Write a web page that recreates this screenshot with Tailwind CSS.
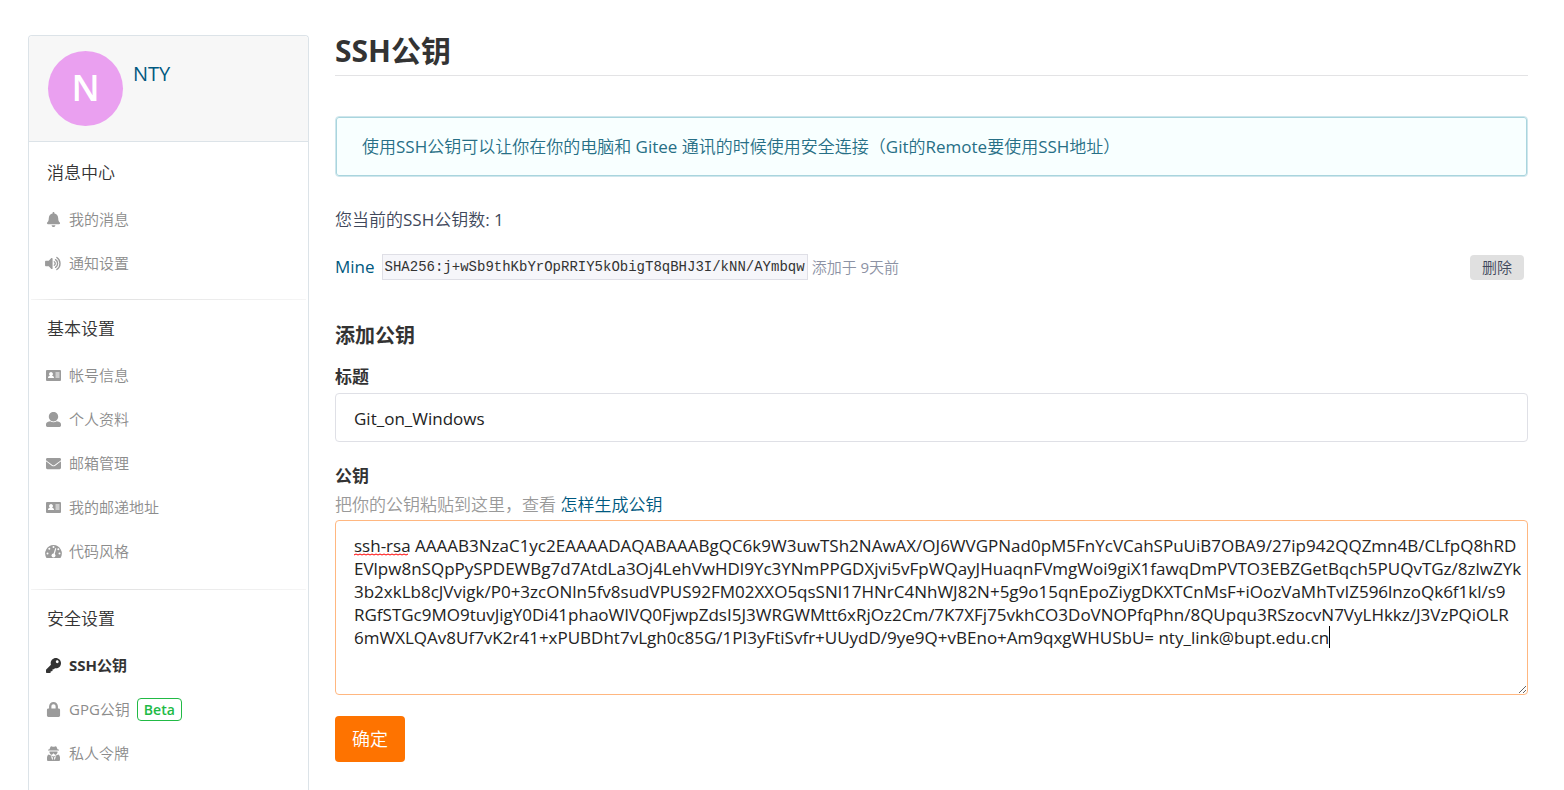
<!DOCTYPE html>
<html lang="zh-CN">
<head>
    <meta charset="UTF-8">
    <meta name="viewport" content="width=device-width, initial-scale=1.0">
    <title>SSH公钥</title>
    <script src="https://cdn.jsdelivr.net/npm/@tailwindcss/browser@4"></script>
    <style>
        body {
            font-family: 'Open Sans', 'Noto Sans CJK SC DemiLight', 'Noto Sans CJK SC', sans-serif;
        }
        .font-bold {
            font-family: 'Open Sans', 'Noto Sans CJK SC', sans-serif;
        }
    </style>
</head>
<body class="bg-white text-[17px] leading-6 text-[#40485b]">

    <div class="flex items-stretch gap-[26px] min-h-screen pl-7 pr-9">

        <!-- 侧边栏 -->
        <aside class="w-[281px] shrink-0 mt-[35px] border border-b-0 border-[#dce3e8] rounded-t text-[#333]">
            <div class="flex items-start gap-2.5 h-[106px] pt-[15px] pl-[19px] bg-[#f7f7f7] border-b border-[#dce3e8] rounded-t">
                <span class="flex items-center justify-center size-[75px] pb-0.5 rounded-full bg-[#eaa0f0] text-white text-[36px] font-semibold">N</span>
                <a href="#" class="mt-[11px] text-[20px] text-[#005980]">NTY</a>
            </div>

            <nav class="pt-0.5">
                <section class="pt-[7px] pb-3.5">
                    <h2 class="flex items-center h-11 mb-0.5 pl-[18px]">消息中心</h2>
                    <ul class="text-[15px] text-[#8c8c8c]">
                        <li><a href="#" class="flex items-center gap-[7px] h-11 pl-4">
                            <svg class="w-[17px] h-[15px] fill-[#9b9b9b]" viewBox="0 0 448 512"><path d="M224 512c35.32 0 63.97-28.65 63.97-64H160.03c0 35.35 28.65 64 63.97 64zm215.39-149.71c-19.32-20.76-55.47-51.99-55.47-154.29 0-77.7-54.48-139.9-127.94-155.16V32c0-17.67-14.32-32-31.98-32s-31.98 14.33-31.98 32v20.84C118.56 68.1 64.08 130.3 64.08 208c0 102.3-36.15 133.53-55.47 154.29-6 6.45-8.66 14.16-8.61 21.71.11 16.4 12.98 32 32.1 32h383.8c19.12 0 32-15.6 32.1-32 .05-7.55-2.61-15.27-8.61-21.71z"/></svg>
                            我的消息</a></li>
                        <li><a href="#" class="flex items-center gap-[7px] h-11 pl-4">
                            <svg class="w-[17px] h-[15px] fill-[#9b9b9b]" viewBox="0 0 576 512"><path d="M215 71L126 160H24c-13 0-24 11-24 24v144c0 13 11 24 24 24h102l89 89c15 15 41 4 41-17V88c0-21-26-32-41-17z"/><g fill="none" stroke="#9b9b9b" stroke-width="46" stroke-linecap="round"><path d="M314 197c44 24 44 94 0 118"/><path d="M358 124c94 60 94 204 0 264"/><path d="M402 51c144 96 144 314 0 410"/></g></svg>
                            通知设置</a></li>
                    </ul>
                </section>
                <hr class="h-px mx-0.5 border-0 bg-linear-to-r from-[#f5f5f5] via-[#dedede] via-15% to-[#f5f5f5]">

                <section class="pt-[7px] pb-4">
                    <h2 class="flex items-center h-11 mb-0.5 pl-[18px]">基本设置</h2>
                    <ul class="text-[15px] text-[#8c8c8c]">
                        <li><a href="#" class="flex items-center gap-[7px] h-11 pl-4">
                            <svg class="w-[17px] h-[15px] fill-[#9b9b9b]" viewBox="0 0 17 15"><path fill-rule="evenodd" d="M2 2h13a1 1 0 0 1 1 1v9a1 1 0 0 1-1 1H2a1 1 0 0 1-1-1V3a1 1 0 0 1 1-1zM6 4a2 2 0 0 0-1 3.700C3.500 8 3 8.700 3 10h6c0-1.300-.5-2-2-2.300A2 2 0 0 0 6 4zM10.500 4.500v1h4v-1zM10.500 6.500v1h4v-1zM10.500 8.500v1h4v-1z"/></svg>
                            帐号信息</a></li>
                        <li><a href="#" class="flex items-center gap-[7px] h-11 pl-4">
                            <svg class="w-[17px] h-[15px] fill-[#9b9b9b]" viewBox="0 0 512 512"><path d="M256 0c88.366 0 160 71.634 160 160s-71.634 160-160 160S96 248.366 96 160 167.634 0 256 0zm183.283 333.821l-71.313-17.828c-74.923 53.89-165.738 41.864-223.94 0l-71.313 17.828C29.981 344.505 0 382.903 0 426.955V464c0 26.51 21.49 48 48 48h416c26.51 0 48-21.49 48-48v-37.045c0-44.052-29.981-82.45-72.717-93.134z"/></svg>
                            个人资料</a></li>
                        <li><a href="#" class="flex items-center gap-[7px] h-11 pl-4">
                            <svg class="w-[17px] h-[15px] fill-[#9b9b9b]" viewBox="0 0 512 512"><path d="M502.3 190.8c3.900-3.100 9.700-.2 9.700 4.700V400c0 26.500-21.500 48-48 48H48c-26.500 0-48-21.500-48-48V195.600c0-5 5.700-7.800 9.700-4.700 22.400 17.400 52.100 39.500 154.100 113.600 21.100 15.400 56.700 47.800 92.200 47.600 35.700.3 72-32.800 92.300-47.600 102-74.100 131.600-96.300 154-113.700zM256 320c23.200.4 56.600-29.200 73.400-41.400 132.700-96.300 142.800-104.700 173.400-128.700 5.800-4.500 9.200-11.500 9.200-18.900v-19c0-26.500-21.500-48-48-48H48c-26.500 0-48 21.500-48 48v19c0 7.400 3.400 14.300 9.200 18.900 30.600 23.900 40.700 32.400 173.400 128.700 16.800 12.200 50.200 41.800 73.400 41.400z"/></svg>
                            邮箱管理</a></li>
                        <li><a href="#" class="flex items-center gap-[7px] h-11 pl-4">
                            <svg class="w-[17px] h-[15px] fill-[#9b9b9b]" viewBox="0 0 17 15"><path fill-rule="evenodd" d="M2 2h13a1 1 0 0 1 1 1v9a1 1 0 0 1-1 1H2a1 1 0 0 1-1-1V3a1 1 0 0 1 1-1zM6 4a2 2 0 0 0-1 3.700C3.500 8 3 8.700 3 10h6c0-1.300-.5-2-2-2.300A2 2 0 0 0 6 4zM10.500 4.500v1h4v-1zM10.500 6.500v1h4v-1zM10.500 8.500v1h4v-1z"/></svg>
                            我的邮递地址</a></li>
                        <li><a href="#" class="flex items-center gap-[7px] h-11 pl-4">
                            <svg class="w-[17px] h-[15px]" viewBox="0 0 17 15"><path fill="#9b9b9b" d="M8.500 1A8.500 8.500 0 0 0 1.500 14h14A8.500 8.500 0 0 0 8.500 1z"/><g fill="#fff"><circle cx="8.500" cy="3" r="1"/><circle cx="4.300" cy="4.800" r="1"/><circle cx="2.500" cy="9.500" r="1"/><circle cx="14.500" cy="9.500" r="1"/><circle cx="13.300" cy="5.300" r="1"/><circle cx="8.500" cy="11.500" r="2"/><path d="M10.300 4l1 .4-2 7.300-1.300-.3z"/></g></svg>
                            代码风格</a></li>
                    </ul>
                </section>
                <hr class="h-px mx-0.5 border-0 bg-linear-to-r from-[#f5f5f5] via-[#dedede] via-15% to-[#f5f5f5]">

                <section class="pt-[7px]">
                    <h2 class="flex items-center h-11 mb-0.5 pl-[18px]">安全设置</h2>
                    <ul class="text-[15px] text-[#8c8c8c]">
                        <li><a href="#" class="flex items-center gap-[7px] h-11 pl-4 font-bold text-[#333]">
                            <svg class="w-[17px] h-[15px] fill-[#333]" viewBox="0 0 512 512"><path d="M512 176.001C512 273.203 433.202 352 336 352c-11.220 0-22.190-1.062-32.827-3.069l-24.012 27.014A23.999 23.999 0 0 1 261.223 384H224v40c0 13.255-10.745 24-24 24h-40v40c0 13.255-10.745 24-24 24H24c-13.255 0-24-10.745-24-24v-78.059c0-6.365 2.529-12.470 7.029-16.971l161.802-161.802C163.108 213.814 160 195.271 160 176 160 78.798 238.797.001 335.999 0 433.488-.001 512 78.511 512 176.001zM336 128c0 26.510 21.490 48 48 48s48-21.490 48-48-21.490-48-48-48-48 21.490-48 48z"/></svg>
                            SSH公钥</a></li>
                        <li><a href="#" class="flex items-center gap-[7px] h-11 pl-4">
                            <svg class="w-[17px] h-[15px] fill-[#9b9b9b]" viewBox="0 0 448 512"><path d="M400 224h-24v-72C376 68.200 307.800 0 224 0S72 68.200 72 152v72H48c-26.500 0-48 21.500-48 48v192c0 26.500 21.500 48 48 48h352c26.500 0 48-21.500 48-48V272c0-26.500-21.500-48-48-48zm-104 0H152v-72c0-39.700 32.300-72 72-72s72 32.300 72 72v72z"/></svg>
                            GPG公钥
                            <span class="px-1.5 border border-[#21ba45] rounded-sm text-[14px] leading-[21px] font-semibold text-[#21ba45]">Beta</span></a></li>
                        <li><a href="#" class="flex items-center gap-[7px] h-11 pl-4">
                            <svg class="w-[17px] h-[15px] fill-[#9b9b9b]" viewBox="0 0 17 15"><path d="M4.500 3.300L5.500.8Q6 0 7 .4q1.500.6 3 0 1-.4 1.500.4l1 2.500 1.500.5v.7H3v-.7z"/><path d="M4.500 5.500h8v1.300l-1 1.500q-1 1-2 0l-1-1-1 1q-1 1-2 0l-1-1.500z"/><path fill-rule="evenodd" d="M3.500 8.500L6 9.500l2.500 1 2.500-1 2.500-1q1.500 1 1.500 3V14a1 1 0 0 1-1 1H3a1 1 0 0 1-1-1v-2.500q0-2 1.500-3zM6 10l1.300 4.300.7-2.300-.6-1.300zM11 10l-1.300 4.300L9 12l.6-1.300z"/></svg>
                            私人令牌</a></li>
                    </ul>
                </section>
            </nav>
        </aside>

        <!-- 主内容 -->
        <main class="flex-1 min-w-0 pt-[33px]">
            <h1 class="pb-1.5 border-b border-[#e3e3e5] text-[30px] leading-9 font-bold text-[#333]">SSH公钥</h1>

            <p class="mt-10 px-[26px] pt-[18px] pb-[17px] border border-[#cfe6ec] rounded bg-[#f8ffff] text-[#276f86] shadow-[inset_0_0_0_1px_#a9d5de]">使用SSH公钥可以让你在你的电脑和 Gitee 通讯的时候使用安全连接（Git的Remote要使用SSH地址）</p>

            <p class="mt-[31px]">您当前的SSH公钥数: 1</p>

            <div class="flex items-center mt-[22px] h-[26px]">
                <a href="#" class="text-[#005980]">Mine</a>
                <code class="ml-[7px] px-0.5 border border-[#dfdfe6] bg-[#f6f6fa] font-['Liberation_Mono',monospace] text-[14px] text-[#333]">SHA256:j+wSb9thKbYrOpRRIY5kObigT8qBHJ3I/kNN/AYmbqw</code>
                <span class="ml-1 text-[15px] text-[#8c92a4]">添加于 9天前</span>
                <button type="button" class="ml-auto mr-1 h-[25px] px-3 rounded-sm bg-[#e0e0e0] text-[15px]">删除</button>
            </div>

            <form>
                <h3 class="mt-11 text-[20px] leading-6 font-bold text-[#333]">添加公钥</h3>

                <label for="key-title" class="block mt-[17px] font-bold text-[#333]">标题</label>
                <input id="key-title" type="text" value="Git_on_Windows" class="block w-full mt-1 px-[18px] pt-3 pb-2.5 leading-[25px] border border-[#dfe0e6] rounded text-[#222] outline-none">

                <label for="key-body" class="block mt-[22px] font-bold text-[#333]">公钥</label>
                <p class="mt-[5px] text-[#999]">把你的公钥粘贴到这里，查看 <a href="#" class="text-[#005980]">怎样生成公钥</a></p>
                <div class="relative mt-[3px]">
                    <textarea id="key-body" rows="6" spellcheck="false" class="block w-full pl-[18px] pr-1 pt-[13px] pb-[22px] leading-[23px] border border-[#ffb780] rounded text-[#222] whitespace-pre overflow-hidden resize outline-none">ssh-rsa AAAAB3NzaC1yc2EAAAADAQABAAABgQC6k9W3uwTSh2NAwAX/OJ6WVGPNad0pM5FnYcVCahSPuUiB7OBA9/27ip942QQZmn4B/CLfpQ8hRD
EVlpw8nSQpPySPDEWBg7d7AtdLa3Oj4LehVwHDl9Yc3YNmPPGDXjvi5vFpWQayJHuaqnFVmgWoi9giX1fawqDmPVTO3EBZGetBqch5PUQvTGz/8zlwZYk
3b2xkLb8cJVvigk/P0+3zcONln5fv8sudVPUS92FM02XXO5qsSNl17HNrC4NhWJ82N+5g9o15qnEpoZiygDKXTCnMsF+iOozVaMhTvIZ596lnzoQk6f1kl/s9
RGfSTGc9MO9tuvJigY0Di41phaoWIVQ0FjwpZdsI5J3WRGWMtt6xRjOz2Cm/7K7XFj75vkhCO3DoVNOPfqPhn/8QUpqu3RSzocvN7VyLHkkz/J3VzPQiOLR
6mWXLQAv8Uf7vK2r41+xPUBDht7vLgh0c85G/1PI3yFtiSvfr+UUydD/9ye9Q+vBEno+Am9qxgWHUSbU= nty_link@bupt.edu.cn</textarea>
                    <!-- 拼写检查波浪线 -->
                    <svg class="absolute left-[19px] top-[33px] w-[54px] h-[3px]" viewBox="0 0 54 3"><path fill="none" stroke="#f00" d="M0 2l2-1 2 1 2-1 2 1 2-1 2 1 2-1 2 1 2-1 2 1 2-1 2 1 2-1 2 1 2-1 2 1 2-1 2 1 2-1 2 1 2-1 2 1 2-1 2 1 2-1 2 1 2-1"/></svg>
                    <!-- 光标 -->
                    <span class="absolute left-[994px] top-[106px] w-px h-[22px] bg-black"></span>
                </div>

                <button type="submit" class="mt-[21px] h-[46px] px-[17px] rounded-sm bg-[#fe7300] text-[18px] text-white">确定</button>
            </form>
        </main>
    </div>

</body>
</html>
